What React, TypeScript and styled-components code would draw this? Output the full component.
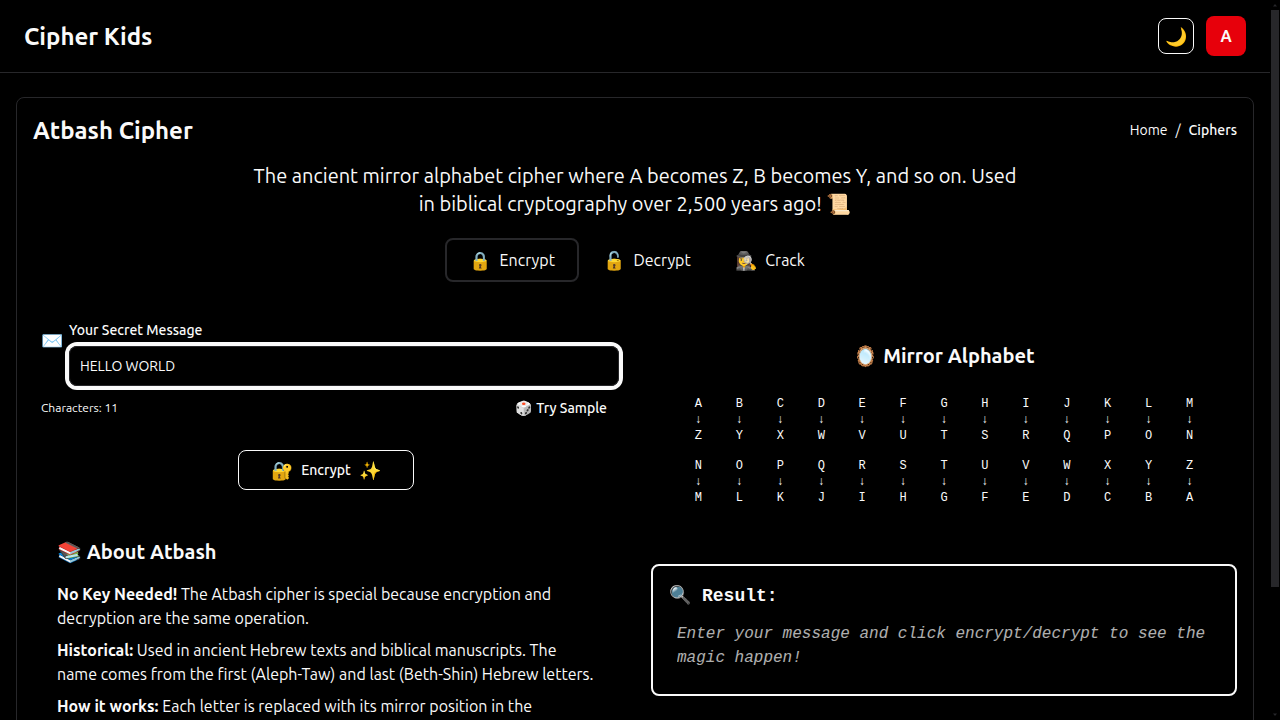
import React, { useState } from 'react';
import styled, { createGlobalStyle } from 'styled-components';

const line = '#27272a';
const fg = '#fafafa';

const GlobalStyle = createGlobalStyle`
  * { box-sizing: border-box; }
  html, body { margin: 0; background: #000; }
  body {
    overflow: hidden;
    color: ${fg};
    font: 400 16px/24px Ubuntu, system-ui, 'Noto Sans', sans-serif;
  }
  h1, h2, h3, p { margin: 0; }
  button, input { font: inherit; color: inherit; background: transparent; border: 0; }
`;

const Window = styled.div`
  display: flex;
  height: 720px;
  overflow: hidden;
`;

const Page = styled.div`
  flex: 1;
  min-width: 0;
  height: 100%;
  overflow: hidden;
`;

const ScrollBar = styled.div`
  width: 10px;
  height: 100%;
  display: flex;
  flex-direction: column;
  align-items: center;
  justify-content: space-between;
`;

const ScrollArrow = styled.svg`
  display: block;
  width: 10px;
  height: 10px;
  fill: ${line};
`;

const ScrollTrack = styled.div`
  flex: 1;
  width: 8px;
`;

const ScrollThumb = styled.div`
  height: 577px;
  background: ${line};
`;

const Header = styled.header`
  display: flex;
  align-items: center;
  justify-content: space-between;
  height: 73px;
  padding: 0 24px;
  border-bottom: 1px solid ${line};
`;

const Title = styled.h1`
  padding-top: 2px;
  font-size: 24px;
  line-height: 30px;
  font-weight: 600;
`;

const HeaderActions = styled.div`
  display: flex;
  align-items: center;
  gap: 12px;
`;

const ThemeButton = styled.button`
  display: flex;
  align-items: center;
  justify-content: center;
  width: 36px;
  height: 36px;
  padding: 0;
  border: 1px solid ${fg};
  border-radius: 8px;
  font-size: 18px;
`;

const Avatar = styled.div`
  display: flex;
  align-items: center;
  justify-content: center;
  width: 40px;
  height: 40px;
  border-radius: 8px;
  background: #e7000b;
  font-weight: 600;
`;

const Card = styled.main`
  margin: 24px 16px;
  padding: 16px;
  border: 1px solid ${line};
  border-radius: 8px;
`;

const CardHeader = styled.div`
  display: flex;
  align-items: center;
  justify-content: space-between;
  margin-bottom: 16px;
`;

const Breadcrumb = styled.nav`
  display: flex;
  gap: 8px;
  font-size: 14px;
  line-height: 20px;
`;

const Current = styled.span`
  font-weight: 500;
`;

const Intro = styled.p`
  max-width: 768px;
  margin: 0 auto 20px;
  font-size: 20px;
  line-height: 28px;
  text-align: center;
`;

const Tabs = styled.div`
  display: flex;
  justify-content: center;
  gap: 4px;
`;

const Tab = styled.button<{ $active: boolean }>`
  display: flex;
  align-items: center;
  gap: 8.5px;
  height: 44px;
  padding: ${(p) => (p.$active ? '0 22px' : '0 20px')};
  border: ${(p) => (p.$active ? `2px solid ${line}` : '0')};
  border-radius: 8px;
`;

const Emoji = styled.span`
  font-size: 18px;
  line-height: 28px;
`;

const Columns = styled.div`
  display: grid;
  grid-template-columns: 1fr 1fr;
  gap: 32px;
  margin-top: 32px;
`;

const Field = styled.div`
  display: flex;
  gap: 6px;
  margin-top: 6px;
  padding-left: 8px;
`;

const FieldIcon = styled(Emoji)`
  width: 22px;
  margin-top: 6px;
`;

const FieldBody = styled.label`
  flex: 1;
  font-size: 14px;
  line-height: 20px;
  font-weight: 500;
`;

const Input = styled.input`
  display: block;
  width: 100%;
  height: 40px;
  margin-top: 6px;
  padding: 0 10px;
  border: 1px solid ${line};
  border-radius: 8px;
  outline: none;
  box-shadow: 0 0 0 4px ${fg};
  font-size: 14px;
  font-weight: 400;
`;

const FieldFooter = styled.div`
  display: flex;
  align-items: center;
  justify-content: space-between;
  height: 32px;
  margin-top: 6px;
  padding-left: 8px;
`;

const Counter = styled.span`
  font-size: 12px;
  line-height: 16px;
`;

const SampleButton = styled.button`
  display: flex;
  align-items: center;
  gap: 4px;
  height: 32px;
  padding: 0 12px;
  font-size: 14px;
  font-weight: 500;
`;

const RunButton = styled.button`
  display: flex;
  align-items: center;
  gap: 8px;
  height: 40px;
  margin: 26px auto 0;
  padding: 0 31.7px;
  border: 1px solid ${fg};
  border-radius: 8px;
  font-size: 14px;
  font-weight: 500;
`;

const SectionTitle = styled.h2`
  font-size: 20px;
  line-height: 28px;
  font-weight: 600;
`;

const About = styled.section`
  margin-top: 24px;
  padding: 24px;
`;

const AboutText = styled.div`
  display: flex;
  flex-direction: column;
  gap: 8px;
  margin-top: 16px;
`;

const Mirror = styled.section`
  display: flex;
  flex-direction: column;
  align-items: center;
  padding: 28px 29px 0;
`;

const Alphabet = styled.div`
  display: grid;
  grid-template-columns: repeat(13, 1fr);
  column-gap: 4px;
  row-gap: 14px;
  width: 100%;
  margin-top: 26px;
  font: 12px/16px 'Liberation Mono', monospace;
  text-align: center;
`;

const Pair = styled.div`
  display: flex;
  flex-direction: column;
`;

const Result = styled.section`
  height: 132px;
  margin-top: 58px;
  padding: 16px;
  border: 2px solid ${fg};
  border-radius: 8px;
  font-family: 'Liberation Mono', monospace;
`;

const ResultTitle = styled.h3`
  display: flex;
  gap: 11px;
  padding-top: 1px;
  font-size: 18px;
  line-height: 27px;
  font-weight: 700;
`;

const Placeholder = styled.p`
  margin-top: 12px;
  padding: 0 8px;
  font-style: italic;
  opacity: 0.7;
`;

const letters = 'ABCDEFGHIJKLMNOPQRSTUVWXYZ'.split('');

const modes = [
  { icon: '🔒', name: 'Encrypt' },
  { icon: '🔓', name: 'Decrypt' },
  { icon: '🕵️‍♀️', name: 'Crack' },
];

export default function App() {
  const [mode, setMode] = useState('Encrypt');
  const [message, setMessage] = useState('HELLO WORLD');

  return (
    <>
      <GlobalStyle />
      <Window>
        <Page>
          <Header>
            <Title>Cipher Kids</Title>
            <HeaderActions>
              <ThemeButton>🌙</ThemeButton>
              <Avatar>A</Avatar>
            </HeaderActions>
          </Header>
          <Card>
            <CardHeader>
              <Title>Atbash Cipher</Title>
              <Breadcrumb>
                <span>Home</span>
                <span>/</span>
                <Current>Ciphers</Current>
              </Breadcrumb>
            </CardHeader>
            <Intro>
              The ancient mirror alphabet cipher where A becomes Z, B becomes Y, and so on. Used in
              biblical cryptography over 2,500 years ago! 📜
            </Intro>
            <Tabs>
              {modes.map((m) => (
                <Tab key={m.name} $active={m.name === mode} onClick={() => setMode(m.name)}>
                  <Emoji>{m.icon}</Emoji>
                  {m.name}
                </Tab>
              ))}
            </Tabs>
            <Columns>
              <div>
                <Field>
                  <FieldIcon>✉️</FieldIcon>
                  <FieldBody>
                    Your Secret Message
                    <Input value={message} onChange={(e) => setMessage(e.target.value)} />
                  </FieldBody>
                </Field>
                <FieldFooter>
                  <Counter>Characters: {message.length}</Counter>
                  <SampleButton>
                    <span>🎲</span>
                    Try Sample
                  </SampleButton>
                </FieldFooter>
                <RunButton>
                  <Emoji>🔐</Emoji>
                  Encrypt
                  <Emoji>✨</Emoji>
                </RunButton>
                <About>
                  <SectionTitle>📚 About Atbash</SectionTitle>
                  <AboutText>
                    <p>
                      <strong>No Key Needed!</strong> The Atbash cipher is special because
                      encryption and decryption are the same operation.
                    </p>
                    <p>
                      <strong>Historical:</strong> Used in ancient Hebrew texts and biblical
                      manuscripts. The name comes from the first (Aleph-Taw) and last (Beth-Shin)
                      Hebrew letters.
                    </p>
                    <p>
                      <strong>How it works:</strong> Each letter is replaced with its mirror
                      position in the
                    </p>
                  </AboutText>
                </About>
              </div>
              <div>
                <Mirror>
                  <SectionTitle>🪞 Mirror Alphabet</SectionTitle>
                  <Alphabet>
                    {letters.map((letter, i) => (
                      <Pair key={letter}>
                        <span>{letter}</span>
                        <span>↓</span>
                        <span>{letters[25 - i]}</span>
                      </Pair>
                    ))}
                  </Alphabet>
                </Mirror>
                <Result>
                  <ResultTitle>
                    <span>🔍</span>
                    <span>Result:</span>
                  </ResultTitle>
                  <Placeholder>
                    Enter your message and click encrypt/decrypt to see the magic happen!
                  </Placeholder>
                </Result>
              </div>
            </Columns>
          </Card>
        </Page>
        <ScrollBar>
          <ScrollArrow viewBox="0 0 10 10">
            <path d="M3 6.5 5 4l2 2.5z" />
          </ScrollArrow>
          <ScrollTrack>
            <ScrollThumb />
          </ScrollTrack>
          <ScrollArrow viewBox="0 0 10 10">
            <path d="M3 3.5 5 6l2-2.5z" />
          </ScrollArrow>
        </ScrollBar>
      </Window>
    </>
  );
}
